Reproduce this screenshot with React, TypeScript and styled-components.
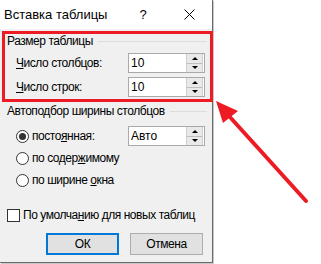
import styled, { createGlobalStyle } from 'styled-components'

const GlobalStyle = createGlobalStyle`
  html, body {
    margin: 0;
    padding: 0;
    background: #ffffff;
  }
  body {
    font-family: "Liberation Sans", Arial, sans-serif;
    font-size: 12px;
    color: #000000;
  }
`

const Page = styled.div`
  position: relative;
  width: 321px;
  height: 264px;
  overflow: hidden;
  background: #ffffff;
`

const Dialog = styled.div`
  width: 212px;
  height: 262px;
  display: flex;
  flex-direction: column;
  background: #f0f0f0;
  border-right: 1px solid #6a6a6a;
  border-bottom: 1px solid #6a6a6a;
  box-shadow: 1px 1px 0 #c8c8c8;
`

const TitleBar = styled.div`
  height: 29px;
  flex-shrink: 0;
  display: flex;
  align-items: center;
  background: #ffffff;
  padding-left: 4px;
`

const Title = styled.div`
  flex: 1;
  font-size: 13px;
  padding-bottom: 1px;
`

const CaptionButton = styled.div`
  width: 46px;
  height: 29px;
  display: flex;
  align-items: center;
  justify-content: center;
  font-size: 13px;
`

const Body = styled.div`
  flex: 1;
  display: flex;
  flex-direction: column;
  padding: 5px 5px 0 7px;
  letter-spacing: -0.45px;
`

const GroupHeader = styled.div<{ $top?: number }>`
  display: flex;
  align-items: center;
  gap: 5px;
  height: 14px;
  line-height: 14px;
  margin-top: ${p => p.$top ?? 0}px;
`

const Rule = styled.div`
  flex: 1;
  height: 1px;
  background: #dcdcdc;
`

const FieldRow = styled.div<{ $top: number }>`
  display: flex;
  align-items: center;
  height: 20px;
  margin-top: ${p => p.$top}px;
  padding-left: 9px;
  padding-right: 2px;
`

const Label = styled.span`
  flex: 1;
  white-space: nowrap;
`

const Key = styled.u`
  text-underline-offset: 1px;
`

const SpinBox = styled.div`
  width: 77px;
  height: 20px;
  box-sizing: border-box;
  display: flex;
  border: 1px solid #a9a9a9;
  background: #ffffff;
  letter-spacing: 0;
`

const SpinValue = styled.div`
  flex: 1;
  padding-left: 2px;
  line-height: 18px;
`

const Spinner = styled.div`
  width: 15px;
  margin: 0 1px 0 0;
  display: flex;
  flex-direction: column;
  border-left: 1px solid #cfcfcf;
  border-right: 1px solid #cfcfcf;
`

const SpinHalf = styled.div<{ $down?: boolean }>`
  flex: 1;
  display: flex;
  align-items: center;
  justify-content: center;
  background: #e9e9e9;
  border-top: ${p => (p.$down ? '1px solid #bdbdbd' : 'none')};
  &::after {
    content: '';
    width: 0;
    height: 0;
    border-left: 3px solid transparent;
    border-right: 3px solid transparent;
    ${p => (p.$down ? 'border-top: 3px solid #000;' : 'border-bottom: 3px solid #000;')}
  }
`

const OptionRow = styled.label<{ $top: number }>`
  display: flex;
  align-items: center;
  height: 20px;
  margin-top: ${p => p.$top}px;
  padding-left: 9px;
  padding-right: 2px;
`

const Radio = styled.span<{ $checked?: boolean }>`
  width: 13px;
  height: 13px;
  box-sizing: border-box;
  border: 1px solid #333333;
  border-radius: 50%;
  background: #ffffff;
  display: flex;
  align-items: center;
  justify-content: center;
  margin-right: 3px;
  flex-shrink: 0;
  &::after {
    content: '';
    width: 7px;
    height: 7px;
    border-radius: 50%;
    background: #333333;
    display: ${p => (p.$checked ? 'block' : 'none')};
  }
`

const CheckRow = styled.label`
  display: flex;
  align-items: center;
  height: 20px;
  margin-top: 15px;
`

const Checkbox = styled.span`
  width: 13px;
  height: 13px;
  box-sizing: border-box;
  border: 1px solid #333333;
  background: #ffffff;
  margin-right: 3px;
  flex-shrink: 0;
`

const ButtonRow = styled.div`
  display: flex;
  justify-content: flex-end;
  gap: 11px;
  margin-top: 8px;
  padding-right: 4px;
`

const Button = styled.div<{ $primary?: boolean }>`
  width: 73px;
  height: 22px;
  box-sizing: border-box;
  display: flex;
  align-items: center;
  justify-content: center;
  background: #e1e1e1;
  border: ${p => (p.$primary ? '2px solid #0078d7' : '1px solid #adadad')};
`

const Highlight = styled.div`
  position: absolute;
  left: 2px;
  top: 31px;
  width: 211px;
  height: 71px;
  box-sizing: border-box;
  border: 3px solid #ed1c24;
  pointer-events: none;
`

const Overlay = styled.svg`
  position: absolute;
  left: 0;
  top: 0;
  pointer-events: none;
`

const Spin = ({ value }: { value: string }) => (
  <SpinBox>
    <SpinValue>{value}</SpinValue>
    <Spinner>
      <SpinHalf />
      <SpinHalf $down />
    </Spinner>
  </SpinBox>
)

export default function App() {
  return (
    <Page>
      <GlobalStyle />
      <Dialog>
        <TitleBar>
          <Title>Вставка таблицы</Title>
          <CaptionButton>?</CaptionButton>
          <CaptionButton>
            <svg width="11" height="11" viewBox="0 0 11 11">
              <path d="M0.5 0.5 L10.5 10.5 M10.5 0.5 L0.5 10.5" stroke="#000" strokeWidth="1" fill="none" />
            </svg>
          </CaptionButton>
        </TitleBar>
        <Body>
          <GroupHeader>
            <span>Размер таблицы</span>
            <Rule />
          </GroupHeader>
          <FieldRow $top={5}>
            <Label><Key>Ч</Key>исло столбцов:</Label>
            <Spin value="10" />
          </FieldRow>
          <FieldRow $top={4}>
            <Label><Key>Ч</Key>исло строк:</Label>
            <Spin value="10" />
          </FieldRow>

          <GroupHeader $top={7}>
            <span>Автоподбор ширины столбцов</span>
            <Rule />
          </GroupHeader>
          <OptionRow $top={8}>
            <Radio $checked />
            <Label>посто<Key>я</Key>нная:</Label>
            <Spin value="Авто" />
          </OptionRow>
          <OptionRow $top={2}>
            <Radio />
            <Label>по содер<Key>ж</Key>имому</Label>
          </OptionRow>
          <OptionRow $top={2}>
            <Radio />
            <Label>по ширине <Key>о</Key>кна</Label>
          </OptionRow>

          <CheckRow>
            <Checkbox />
            <Label>По умолча<Key>н</Key>ию для новых таблиц</Label>
          </CheckRow>

          <ButtonRow>
            <Button $primary>ОК</Button>
            <Button>Отмена</Button>
          </ButtonRow>
        </Body>
      </Dialog>

      <Highlight />
      <Overlay width="321" height="264" viewBox="0 0 321 264">
        <line x1="229" y1="116" x2="306" y2="201" stroke="#ed1c24" strokeWidth="4" strokeLinecap="round" />
        <polygon points="216,101 238,111 223,123" fill="#ed1c24" />
      </Overlay>
    </Page>
  )
}
